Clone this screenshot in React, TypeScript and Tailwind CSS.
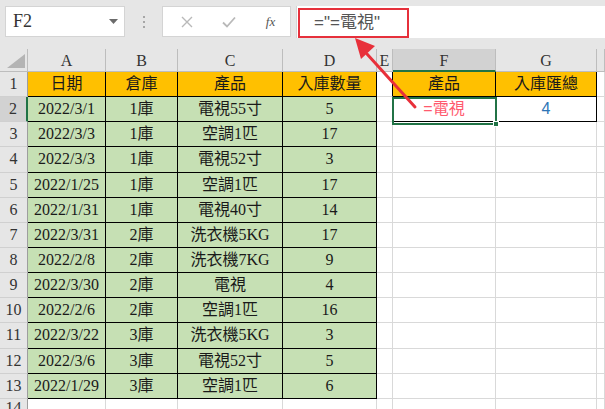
import React from "react";

const serif = "font-['Liberation_Serif','Noto_Sans_CJK_TC',serif]";

const data: string[][] = [
  ["2022/3/1", "1庫", "電視55寸", "5"],
  ["2022/3/3", "1庫", "空調1匹", "17"],
  ["2022/3/3", "1庫", "電視52寸", "3"],
  ["2022/1/25", "1庫", "空調1匹", "17"],
  ["2022/1/31", "1庫", "電視40寸", "14"],
  ["2022/3/31", "2庫", "洗衣機5KG", "17"],
  ["2022/2/8", "2庫", "洗衣機7KG", "9"],
  ["2022/3/30", "2庫", "電視", "4"],
  ["2022/2/6", "2庫", "空調1匹", "16"],
  ["2022/3/22", "3庫", "洗衣機5KG", "3"],
  ["2022/3/6", "3庫", "電視52寸", "5"],
  ["2022/1/29", "3庫", "空調1匹", "6"],
];

const letters = ["A", "B", "C", "D", "E", "F", "G", ""];

function FormulaBar() {
  return (
    <div className="flex items-start h-[49px] pt-[6px] bg-[#e6e6e6]">
      {/* Name box */}
      <div className="ml-[5px] w-[120px] h-[31px] bg-white border border-[#d4d4d4] flex items-center justify-between pl-[7px] pr-[6px]">
        <span className={`${serif} text-[18px] text-[#333]`}>F2</span>
        <svg width="9" height="5" viewBox="0 0 9 5">
          <polygon points="0,0 9,0 4.5,5" fill="#6b6b6b" />
        </svg>
      </div>
      {/* Separator dots */}
      <div className="w-[37px] h-[31px] flex flex-col items-center justify-center gap-[3px]">
        <span className="w-[2px] h-[2px] bg-[#a6a6a6]" />
        <span className="w-[2px] h-[2px] bg-[#a6a6a6]" />
        <span className="w-[2px] h-[2px] bg-[#a6a6a6]" />
      </div>
      {/* Cancel / enter / fx */}
      <div className="w-[129px] h-[31px] bg-white border border-[#d4d4d4] flex items-center">
        <div className="w-[44px] flex justify-center pl-[3px]">
          <svg width="12" height="12" viewBox="0 0 12 12">
            <path d="M1 1 L11 11 M11 1 L1 11" stroke="#b9b9b9" strokeWidth="1.4" />
          </svg>
        </div>
        <div className="w-[44px] flex justify-center">
          <svg width="14" height="12" viewBox="0 0 14 12">
            <path d="M1 6.5 L5 10.5 L13 1.5" stroke="#b9b9b9" strokeWidth="1.8" fill="none" />
          </svg>
        </div>
        <div className="flex-1 flex justify-center">
          <span className={`${serif} italic text-[13px] text-[#555]`}>fx</span>
        </div>
      </div>
      {/* Formula field */}
      <div className="ml-[5px] flex-1 h-[32px] bg-white border-l border-[#d4d4d4]">
        <div className="mt-[2px] ml-px w-[111px] h-[30px] border-2 border-[#e6303b] flex items-center pl-[14px]">
          <span className="font-['Liberation_Sans','Noto_Sans_CJK_TC',sans-serif] text-[17px] text-[#555]">
            ="=電視"
          </span>
        </div>
      </div>
    </div>
  );
}

function Sheet() {
  const cells: React.ReactNode[] = [];

  // header row
  cells.push(
    <div key="corner" className="bg-[#e6e6e6] border-r border-b border-[#bdbdbd] flex items-end justify-end pr-[2px] pb-[3px]">
      <svg width="18" height="14" viewBox="0 0 18 14">
        <polygon points="0,14 18,0 18,14" fill="#b4b4b4" />
      </svg>
    </div>
  );
  letters.forEach((l, i) => {
    const sel = l === "F";
    cells.push(
      <div
        key={"h" + i}
        className={`${serif} text-[16px] text-[#333] flex items-center justify-center pt-[2px] border-r ${
          sel ? "bg-[#d2d2d2] border-b-2 border-b-[#217346] border-r-[#bdbdbd]" : "bg-[#e6e6e6] border-b border-[#bdbdbd]"
        }`}
      >
        {l}
      </div>
    );
  });

  const rows: (string[] | null)[] = [["日期", "倉庫", "產品", "入庫數量"], ...data, null];

  rows.forEach((row, r) => {
    const n = r + 1;
    const selRow = n === 2;
    cells.push(
      <div
        key={"r" + n}
        className={`${serif} text-[16px] text-[#333] flex items-center justify-center border-b border-[#d0d0d0] ${
          selRow ? "bg-[#d2d2d2] border-r-2 border-r-[#217346]" : "bg-[#e6e6e6] border-r border-r-[#9e9e9e]"
        }`}
      >
        {n}
      </div>
    );
    for (let c = 0; c < 8; c++) {
      let cls = "border-r border-b border-[#d9d9d9]";
      let text = "";
      let color = "text-[#1a1a1a]";
      if (row && c < 4) {
        text = row[c];
        cls = `border-r border-b border-black ${n === 1 ? "bg-[#ffc000]" : "bg-[#c6e0b4]"}`;
      } else if (c === 4 && n <= 2) {
        cls = "border-r border-r-black border-b border-b-[#d9d9d9]";
      } else if ((c === 5 || c === 6) && n <= 2) {
        cls = `border-r border-b border-black ${n === 1 ? "bg-[#ffc000]" : "bg-white"}`;
        if (n === 1) text = c === 5 ? "產品" : "入庫匯總";
        else if (c === 5) {
          text = "=電視";
          color = "text-[#ff5a6e]";
        } else {
          text = "4";
          color = "text-[#2e75b6]";
        }
      }
      const sans = n === 2 && (c === 5 || c === 6);
      cells.push(
        <div
          key={`c${n}-${c}`}
          className={`${cls} ${color} ${
            sans ? "font-['Liberation_Sans','Noto_Sans_CJK_TC',sans-serif]" : serif
          } text-[16px] flex items-center justify-center whitespace-nowrap overflow-hidden`}
        >
          {text}
        </div>
      );
    }
  });

  return (
    <div className="relative">
      <div className="grid grid-cols-[28px_78px_72px_105px_94px_16px_103px_101px_1fr] grid-rows-[23px_repeat(13,25.15px)_20px]">
        {cells}
      </div>
      {/* active cell F2 */}
      <div className="absolute left-[392px] top-[48px] w-[105px] h-[28px] border-2 border-[#217346]">
        <div className="absolute -right-[4px] -bottom-[4px] w-[6px] h-[6px] bg-[#217346] border border-white" />
      </div>
    </div>
  );
}

export default function App() {
  return (
    <div className="relative w-[605px] h-[409px] overflow-hidden bg-white">
      <FormulaBar />
      <Sheet />
      {/* callout arrow */}
      <svg className="absolute inset-0 pointer-events-none" width="605" height="409" viewBox="0 0 605 409">
        <line x1="415" y1="107" x2="367" y2="54" stroke="#e8303a" strokeWidth="3" strokeLinecap="round" />
        <polygon points="355,38 375,46 361,59" fill="#e8303a" />
      </svg>
    </div>
  );
}
